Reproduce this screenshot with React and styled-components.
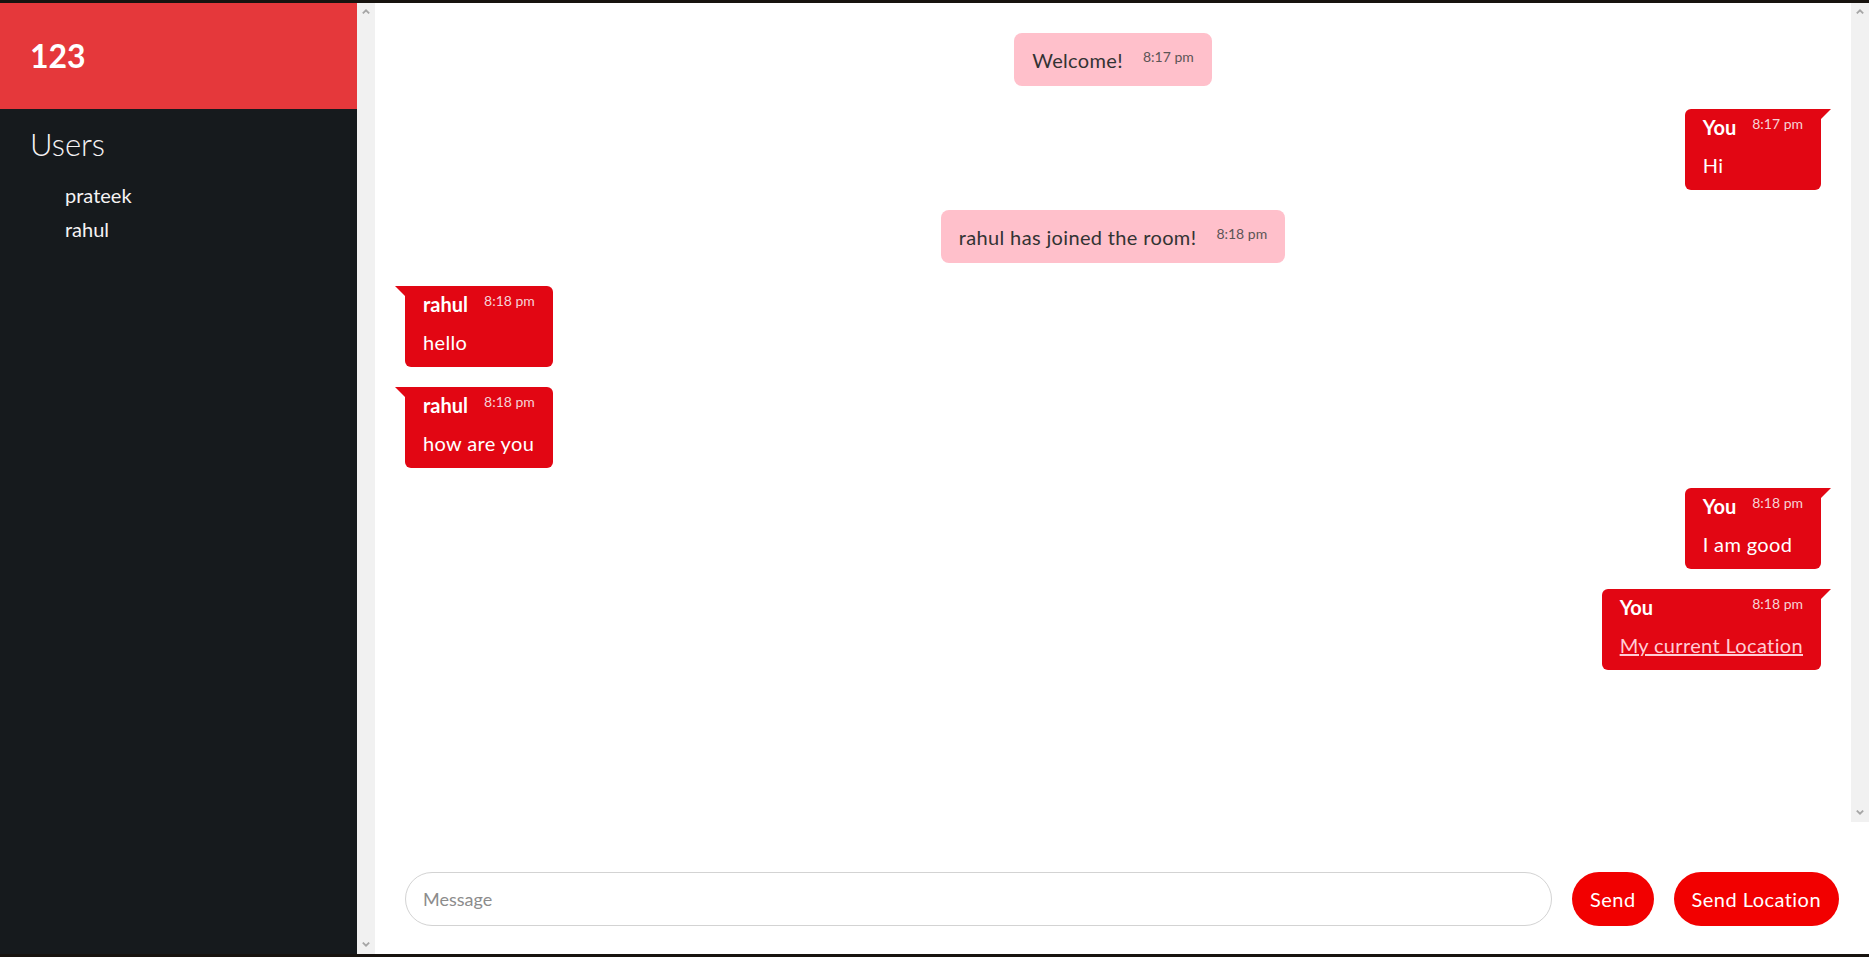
import React from 'react';
import styled, { createGlobalStyle, css } from 'styled-components';

const GlobalStyle = createGlobalStyle`
  *, *::before, *::after { box-sizing: border-box; }
  html, body { margin: 0; padding: 0; height: 100%; }
  body {
    font-family: Lato, "Liberation Sans", sans-serif;
    background: #ffffff;
    color: #333333;
  }
  #root { height: 100%; }
`;

const Page = styled.div`
  display: flex;
  height: 100vh;
  border-top: 3px solid #17130f;
  border-bottom: 3px solid #17130f;
  overflow: hidden;
`;

const Sidebar = styled.aside`
  display: flex;
  flex: none;
`;

const SidebarBody = styled.div`
  width: 357px;
  background: #161a1d;
  color: #f5f3f4;
  display: flex;
  flex-direction: column;
`;

const RoomHeader = styled.header`
  height: 106px;
  background: #e5383b;
  display: flex;
  align-items: center;
  padding: 0 30px;
`;

const RoomName = styled.h1`
  margin: 0;
  font-size: 32px;
  font-weight: 700;
  line-height: 1;
  color: #ffffff;
`;

const UsersSection = styled.section`
  padding: 17px 30px;
`;

const UsersTitle = styled.h2`
  margin: 0;
  font-size: 31px;
  font-weight: 300;
  line-height: 36px;
`;

const UserList = styled.ul`
  margin: 16px 0 0;
  padding-left: 35px;
  list-style: none;
`;

const UserItem = styled.li`
  font-size: 20px;
  line-height: 34px;
`;

const Rail = styled.div`
  width: 18px;
  flex: none;
  background: #f1f1f1;
  display: flex;
  flex-direction: column;
  justify-content: space-between;
  align-items: center;
  padding: 6px 0 7px;
`;

const Main = styled.main`
  flex: 1;
  min-width: 0;
  display: flex;
  flex-direction: column;
`;

const MessagesRow = styled.div`
  flex: 1;
  min-height: 0;
  display: flex;
`;

const MessageList = styled.div`
  flex: 1;
  display: flex;
  flex-direction: column;
  padding: 30px;
`;

const Bubble = styled.div`
  position: relative;
  display: flex;
  ${(p) =>
    p.$variant === 'system'
      ? css`
          align-self: center;
          align-items: flex-start;
          gap: 20px;
          background: #ffc0cb;
          color: #333333;
          border-radius: 8px;
          padding: 15px 18px 14px;
          margin-bottom: 23px;
        `
      : css`
          flex-direction: column;
          align-self: ${p.$variant === 'mine' ? 'flex-end' : 'flex-start'};
          background: #e20613;
          color: #ffffff;
          border-radius: 6px;
          padding: 6px 18px 13px;
          margin-bottom: 20px;
          ${p.$variant === 'mine'
            ? css`border-top-right-radius: 0;`
            : css`border-top-left-radius: 0;`}
          &::before {
            content: '';
            position: absolute;
            top: 0;
            width: 0;
            height: 0;
            border-bottom: 10px solid transparent;
            ${p.$variant === 'mine'
              ? css`
                  left: 100%;
                  border-left: 10px solid #e20613;
                `
              : css`
                  right: 100%;
                  border-right: 10px solid #e20613;
                `}
          }
        `}
`;

const BubbleHead = styled.div`
  display: flex;
  align-items: flex-start;
  justify-content: space-between;
  gap: 16px;
`;

const Sender = styled.span`
  font-size: 20px;
  font-weight: 700;
  line-height: 24px;
`;

const Time = styled.span`
  font-size: 14px;
  line-height: 17px;
  white-space: nowrap;
  color: ${(p) => (p.$dark ? '#5c5556' : '#f6d2d6')};
`;

const Text = styled.p`
  margin: ${(p) => (p.$inline ? '0' : '14px 0 0')};
  font-size: 20px;
  line-height: 24px;
  letter-spacing: 0.35px;
`;

const LocationLink = styled.a`
  color: #ffccd5;
  text-decoration: underline;
`;

const Compose = styled.form`
  display: flex;
  align-items: center;
  gap: 20px;
  padding: 50px 30px 28px;
`;

const MessageInput = styled.input`
  flex: 1;
  min-width: 0;
  height: 54px;
  border: 1px solid #d3d3d3;
  border-radius: 27px;
  padding: 0 17px;
  font-family: Lato, "Liberation Sans", sans-serif;
  font-size: 18px;
  color: #333333;
  outline: none;
  &::placeholder { color: #8c8c8c; }
`;

const Button = styled.button`
  height: 54px;
  padding: 0 18px;
  border: none;
  border-radius: 27px;
  background: #f20000;
  color: #ffffff;
  font-family: Lato, "Liberation Sans", sans-serif;
  font-size: 20px;
  letter-spacing: 0.45px;
  cursor: pointer;
`;

const Chevron = ({ down }) => (
  <svg width="8" height="5" viewBox="0 0 8 5" style={down ? { transform: 'rotate(180deg)' } : undefined}>
    <polyline points="0.8,4.4 4,1.3 7.2,4.4" fill="none" stroke="#a6a6a6" strokeWidth="1.8" />
  </svg>
);

const ScrollRail = () => (
  <Rail>
    <Chevron />
    <Chevron down />
  </Rail>
);

const messages = [
  { type: 'system', text: 'Welcome!', time: '8:17 pm' },
  { type: 'mine', name: 'You', text: 'Hi', time: '8:17 pm' },
  { type: 'system', text: 'rahul has joined the room!', time: '8:18 pm' },
  { type: 'other', name: 'rahul', text: 'hello', time: '8:18 pm' },
  { type: 'other', name: 'rahul', text: 'how are you', time: '8:18 pm' },
  { type: 'mine', name: 'You', text: 'I am good', time: '8:18 pm' },
  { type: 'mine', name: 'You', link: 'My current Location', time: '8:18 pm' },
];

export default function App() {
  return (
    <>
      <GlobalStyle />
      <Page>
        <Sidebar>
          <SidebarBody>
            <RoomHeader>
              <RoomName>123</RoomName>
            </RoomHeader>
            <UsersSection>
              <UsersTitle>Users</UsersTitle>
              <UserList>
                <UserItem>prateek</UserItem>
                <UserItem>rahul</UserItem>
              </UserList>
            </UsersSection>
          </SidebarBody>
          <ScrollRail />
        </Sidebar>
        <Main>
          <MessagesRow>
            <MessageList>
              {messages.map((m, i) =>
                m.type === 'system' ? (
                  <Bubble key={i} $variant="system">
                    <Text $inline>{m.text}</Text>
                    <Time $dark>{m.time}</Time>
                  </Bubble>
                ) : (
                  <Bubble key={i} $variant={m.type}>
                    <BubbleHead>
                      <Sender>{m.name}</Sender>
                      <Time>{m.time}</Time>
                    </BubbleHead>
                    <Text>
                      {m.link ? (
                        <LocationLink href="#">{m.link}</LocationLink>
                      ) : (
                        m.text
                      )}
                    </Text>
                  </Bubble>
                )
              )}
            </MessageList>
            <ScrollRail />
          </MessagesRow>
          <Compose onSubmit={(e) => e.preventDefault()}>
            <MessageInput placeholder="Message" />
            <Button type="submit">Send</Button>
            <Button type="button">Send Location</Button>
          </Compose>
        </Main>
      </Page>
    </>
  );
}
